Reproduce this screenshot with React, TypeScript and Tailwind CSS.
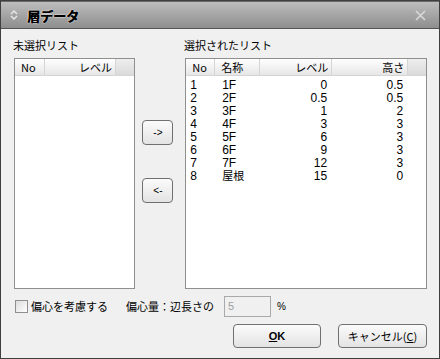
import React from "react";

const ui = { fontFamily: '"Noto Sans CJK JP", "Liberation Sans", sans-serif' };
const num = { fontFamily: '"Liberation Sans", "Noto Sans CJK JP", sans-serif' };

const rows = [
  ["1", "1F", "0", "0.5"],
  ["2", "2F", "0.5", "0.5"],
  ["3", "3F", "1", "2"],
  ["4", "4F", "3", "3"],
  ["5", "5F", "6", "3"],
  ["6", "6F", "9", "3"],
  ["7", "7F", "12", "3"],
  ["8", "屋根", "15", "0"],
];

function HeaderCell({ w, children, right, grow }: { w?: number; children?: React.ReactNode; right?: boolean; grow?: boolean }) {
  return (
    <div
      className={`h-full flex items-center border-r border-[#d5d5d5] text-[11px] leading-none text-black ${right ? "justify-end pr-[3px]" : "pl-[6px]"} ${grow ? "flex-1" : ""}`}
      style={w ? { width: w } : undefined}
    >
      {children}
    </div>
  );
}

function SmallBtn({ label }: { label: string }) {
  return (
    <div className="w-[31px] h-[25px] rounded-[4px] border border-[#707070] bg-gradient-to-b from-[#fbfbfb] to-[#e3e3e3] flex items-center justify-center text-[10px] text-black" style={num}>
      {label}
    </div>
  );
}

export default function App() {
  return (
    <div className="w-[440px] h-[359px] bg-[#f0f0f0] border border-[#3f3f3f] flex flex-col overflow-hidden" style={ui}>
      {/* title bar */}
      <div className="h-[28px] shrink-0 border-t border-[#6a6a6a] border-b border-b-[#555] bg-gradient-to-b from-[#bdbdbd] to-[#8e8e8e] flex items-center px-[9px]">
        <svg width="8" height="12" viewBox="0 0 8 12" className="mr-[9px]">
          <path d="M1 5 L4 2 L7 5" stroke="#e8e8e8" strokeWidth="1.4" fill="none" />
          <path d="M1 7 L4 10 L7 7" stroke="#e8e8e8" strokeWidth="1.4" fill="none" />
        </svg>
        <span
          className="text-[13px] font-bold text-black leading-none"
          style={{ textShadow: "0.6px 0 0 #000, 0 0 2px #fff, 0 0 1px #fff" }}
        >
          層データ
        </span>
        <div className="flex-1" />
        <svg width="11" height="11" viewBox="0 0 11 11" className="mr-[4px]">
          <path d="M1 1 L10 10 M10 1 L1 10" stroke="#d8d8d8" strokeWidth="1.6" />
        </svg>
      </div>

      {/* body */}
      <div className="flex-1 flex flex-col px-[12px]">
        <div className="flex mt-[9px] h-[14px] items-center text-[11px] text-black leading-none">
          <div className="w-[171px]">未選択リスト</div>
          <div>選択されたリスト</div>
        </div>

        <div className="flex mt-[6px] h-[231px]">
          {/* left list */}
          <div className="w-[122px] ml-[1px] border border-[#8e8f8f] bg-white flex flex-col">
            <div className="h-[17px] flex bg-gradient-to-b from-[#ffffff] to-[#e6e6e6] border-b border-[#d5d5d5]">
              <HeaderCell w={30}>No</HeaderCell>
              <HeaderCell w={71} right>レベル</HeaderCell>
              <div className="flex-1 h-full bg-gradient-to-b from-[#eeeeee] to-[#dadada]" />
            </div>
          </div>

          {/* buttons */}
          <div className="w-[50px] flex flex-col items-start pl-[7px]">
            <div className="mt-[62px]"><SmallBtn label="->" /></div>
            <div className="mt-[33px]"><SmallBtn label="<-" /></div>
          </div>

          {/* right list */}
          <div className="w-[243px] border border-[#8e8f8f] bg-white flex flex-col">
            <div className="h-[17px] flex bg-gradient-to-b from-[#ffffff] to-[#e6e6e6] border-b border-[#d5d5d5]">
              <HeaderCell w={29}>No</HeaderCell>
              <HeaderCell w={45}>名称</HeaderCell>
              <HeaderCell w={72} right>レベル</HeaderCell>
              <HeaderCell w={76} right>高さ</HeaderCell>
              <div className="flex-1 h-full bg-gradient-to-b from-[#eeeeee] to-[#dadada]" />
            </div>
            <div className="pt-[2px]">
              {rows.map((r) => (
                <div key={r[0]} className="h-[13px] flex items-center text-[12px] leading-none text-black" style={num}>
                  <div className="w-[29px] pl-[4px]">{r[0]}</div>
                  <div
                    className={`w-[45px] pl-[7px] ${r[1] === "屋根" ? "text-[11px] leading-[11px]" : ""}`}
                    style={r[1] === "屋根" ? ui : num}
                  >
                    {r[1]}
                  </div>
                  <div className="w-[72px] text-right pr-[5px]">{r[2]}</div>
                  <div className="w-[76px] text-right pr-[5px]">{r[3]}</div>
                </div>
              ))}
            </div>
          </div>
        </div>

        {/* options row */}
        <div className="flex items-center mt-[7px] h-[21px] text-[11px] text-black leading-none">
          <div className="w-[13px] h-[13px] ml-[2px] border border-[#8f8f8f] bg-gradient-to-br from-[#dcdcdc] to-[#ffffff]" />
          <span className="ml-[3px]">偏心を考慮する</span>
          <span className="ml-[18px]">偏心量：辺長さの</span>
          <div className="ml-[10px] w-[47px] h-[21px] border border-[#a9a9a9] bg-[#f0f0f0] flex items-center pl-[3px] text-[#a0a0a0] text-[11px]" style={num}>5</div>
          <span className="ml-[6px] text-[10px]" style={num}>%</span>
        </div>

        {/* bottom buttons */}
        <div className="flex justify-end mt-[7px]">
          <div className="w-[88px] h-[24px] rounded-[4px] border border-[#707070] bg-gradient-to-b from-[#fbfbfb] to-[#e3e3e3] flex items-center justify-center text-[11px] font-bold text-black" style={num}>
            <span><span className="underline">O</span>K</span>
          </div>
          <div className="w-[89px] h-[24px] ml-[17px] rounded-[4px] border border-[#707070] bg-gradient-to-b from-[#fbfbfb] to-[#e3e3e3] flex items-center justify-center text-[11px] text-black leading-none">
            <span>キャンセル(<span className="underline">C</span>)</span>
          </div>
        </div>
      </div>
    </div>
  );
}
